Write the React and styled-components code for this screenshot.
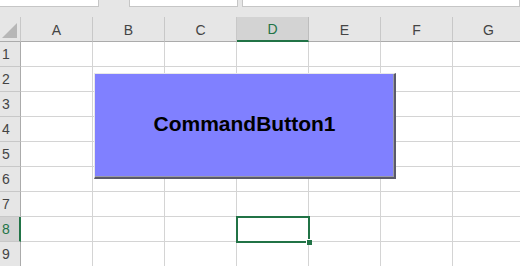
import styled, { createGlobalStyle } from "styled-components";

const GlobalStyle = createGlobalStyle`
  html, body {
    margin: 0;
    padding: 0;
    background: #ffffff;
    overflow: hidden;
  }
`;

const COLUMNS = ["A", "B", "C", "D", "E", "F", "G"];
const ROWS = [1, 2, 3, 4, 5, 6, 7, 8, 9];
const ACTIVE_COL = "D";
const ACTIVE_ROW = 8;

function App() {
  return (
    <>
      <GlobalStyle />
      <Page>
        <TopBar>
          <TopBox $width={98} $noLeft />
          <TopBox $width={107} $offset={30} />
          <TopBox $grow $offset={4} />
        </TopBar>
        <SheetArea>
          <Grid>
            <Corner>
              <CornerTriangle />
            </Corner>
            {COLUMNS.map((c) => (
              <ColHeader key={c} $active={c === ACTIVE_COL}>
                {c}
              </ColHeader>
            ))}
            {ROWS.map((r) => (
              <RowGroup key={r}>
                <RowHeader $active={r === ACTIVE_ROW}>{r}</RowHeader>
                {COLUMNS.map((c) => (
                  <Cell key={c} $selected={r === ACTIVE_ROW && c === ACTIVE_COL}>
                    {r === ACTIVE_ROW && c === ACTIVE_COL && <FillHandle />}
                  </Cell>
                ))}
              </RowGroup>
            ))}
          </Grid>
          <CommandButton>CommandButton1</CommandButton>
        </SheetArea>
      </Page>
    </>
  );
}

const Page = styled.div`
  width: 520px;
  height: 266px;
  display: flex;
  flex-direction: column;
  overflow: hidden;
  font-family: "Liberation Sans", Arial, sans-serif;
`;

const TopBar = styled.div`
  height: 17px;
  flex: none;
  display: flex;
  align-items: flex-start;
  background: #e6e6e6;
`;

const TopBox = styled.div`
  height: 6px;
  width: ${(p) => (p.$grow ? "auto" : `${p.$width}px`)};
  flex: ${(p) => (p.$grow ? "1" : "none")};
  margin-left: ${(p) => p.$offset || 0}px;
  background: #ffffff;
  border: 1px solid #c6c6c6;
  border-top: none;
  border-left-width: ${(p) => (p.$noLeft ? 0 : 1)}px;
`;

const SheetArea = styled.div`
  position: relative;
  flex: 1;
`;

const Grid = styled.div`
  display: grid;
  grid-template-columns: 21px repeat(7, 72px);
  grid-auto-rows: 25px;
`;

const RowGroup = styled.div`
  display: contents;
`;

const Corner = styled.div`
  position: relative;
  background: #e6e6e6;
  border-right: 1px solid #c8c8c8;
  border-bottom: 1px solid #ababab;
`;

const CornerTriangle = styled.div`
  position: absolute;
  right: 3px;
  bottom: 3px;
  width: 0;
  height: 0;
  border-left: 15px solid transparent;
  border-bottom: 15px solid #b7b7b7;
`;

const ColHeader = styled.div`
  display: flex;
  align-items: center;
  justify-content: center;
  padding-top: 1px;
  box-sizing: border-box;
  font-size: 14px;
  color: ${(p) => (p.$active ? "#217346" : "#444444")};
  background: ${(p) => (p.$active ? "#d3d3d3" : "#e6e6e6")};
  border-right: 1px solid ${(p) => (p.$active ? "#bdbdbd" : "#c8c8c8")};
  border-bottom: ${(p) => (p.$active ? "2px solid #217346" : "1px solid #ababab")};
`;

const RowHeader = styled.div`
  display: flex;
  align-items: center;
  padding-left: 2px;
  box-sizing: border-box;
  font-size: 14px;
  color: ${(p) => (p.$active ? "#217346" : "#444444")};
  background: ${(p) => (p.$active ? "#d3d3d3" : "#e6e6e6")};
  border-right: ${(p) => (p.$active ? "2px solid #217346" : "1px solid #ababab")};
  border-bottom: 1px solid #c8c8c8;
`;

const Cell = styled.div`
  position: relative;
  box-sizing: border-box;
  border-right: 1px solid #d4d4d4;
  border-bottom: 1px solid #d4d4d4;
  ${(p) =>
    p.$selected &&
    `
    outline: 2px solid #217346;
    outline-offset: -1px;
    z-index: 1;
  `}
`;

const FillHandle = styled.div`
  position: absolute;
  right: -4px;
  bottom: -4px;
  width: 5px;
  height: 5px;
  background: #217346;
  border: 1px solid #ffffff;
  border-width: 1px 0 0 1px;
`;

const CommandButton = styled.div`
  position: absolute;
  left: 94px;
  top: 56px;
  width: 302px;
  height: 106px;
  box-sizing: border-box;
  display: flex;
  align-items: center;
  justify-content: center;
  background: #8080ff;
  border-style: solid;
  border-width: 1px 2px 2px 1px;
  border-color: #e8e8e8 #5a5a6a #5a5a6a #e8e8e8;
  box-shadow: inset -1px -1px 0 #9a9aa8;
  font-family: "Liberation Sans", Arial, sans-serif;
  font-weight: bold;
  font-size: 21px;
  color: #000000;
  padding-bottom: 3px;
  z-index: 2;
`;

export default App;
